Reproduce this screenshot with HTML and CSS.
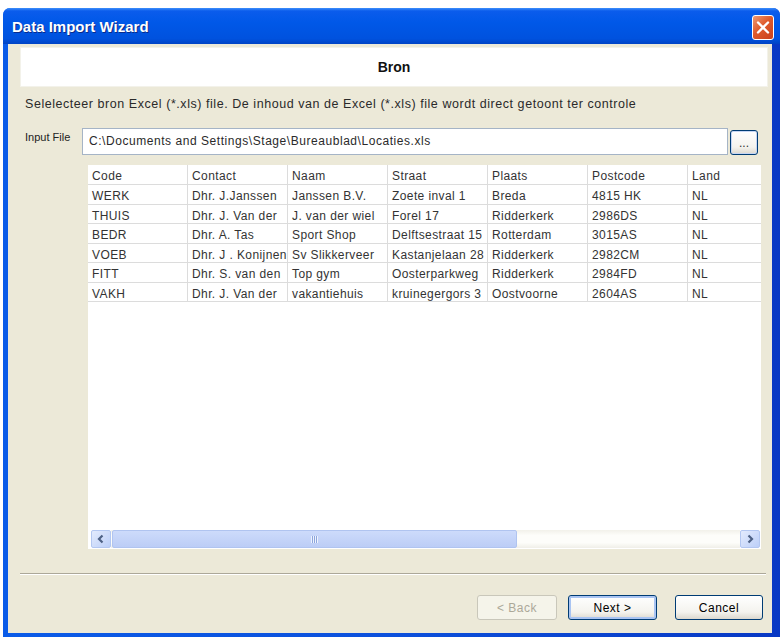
FILE: index.html
```html
<!DOCTYPE html>
<html>
<head>
<meta charset="UTF-8">
<title>Data Import Wizard</title>
<link rel="stylesheet" href="styles.css">
</head>
<body>
<div class="window">
    <div class="titlebar">
        <span class="title">Data Import Wizard</span>
        <span class="close">
            <svg width="20" height="23" viewBox="0 0 20 23"><path d="M5 6.5 L15 16.5 M15 6.5 L5 16.5" stroke="#fff" stroke-width="2.4" stroke-linecap="round"/></svg>
        </span>
    </div>
    <div class="client">
        <div class="step-head">Bron</div>
        <p class="hint">Selelecteer bron Excel (*.xls) file. De inhoud van de Excel (*.xls) file wordt direct getoont ter controle</p>
        <div class="file-row">
            <label>Input File</label>
            <div class="file-input">C:\Documents and Settings\Stage\Bureaublad\Locaties.xls</div>
            <button class="btn browse" type="button">...</button>
        </div>
        <div class="grid-box">
            <div class="grid">
                <table>
                    <tr class="head"><td>Code</td><td>Contact</td><td>Naam</td><td>Straat</td><td>Plaats</td><td>Postcode</td><td>Land</td></tr>
                    <tr><td>WERK</td><td>Dhr. J.Janssen</td><td>Janssen B.V.</td><td>Zoete inval 1</td><td>Breda</td><td>4815 HK</td><td>NL</td></tr>
                    <tr><td>THUIS</td><td>Dhr. J. Van der</td><td>J. van der wiel</td><td>Forel 17</td><td>Ridderkerk</td><td>2986DS</td><td>NL</td></tr>
                    <tr><td>BEDR</td><td>Dhr. A. Tas</td><td>Sport Shop</td><td>Delftsestraat 15</td><td>Rotterdam</td><td>3015AS</td><td>NL</td></tr>
                    <tr><td>VOEB</td><td>Dhr. J . Konijnen</td><td>Sv Slikkerveer</td><td>Kastanjelaan 28</td><td>Ridderkerk</td><td>2982CM</td><td>NL</td></tr>
                    <tr><td>FITT</td><td>Dhr. S. van den</td><td>Top gym</td><td>Oosterparkweg</td><td>Ridderkerk</td><td>2984FD</td><td>NL</td></tr>
                    <tr><td>VAKH</td><td>Dhr. J. Van der</td><td>vakantiehuis</td><td>kruinegergors 3</td><td>Oostvoorne</td><td>2604AS</td><td>NL</td></tr>
                </table>
            </div>
            <div class="hscroll">
                <span class="sb-btn">
                    <svg width="10" height="10" viewBox="0 0 10 10"><path d="M6.5 1.5 L3 5 L6.5 8.5" fill="none" stroke="#4d6185" stroke-width="2.2"/></svg>
                </span>
                <span class="sb-track">
                    <span class="sb-thumb"><span class="grip"></span></span>
                </span>
                <span class="sb-btn">
                    <svg width="10" height="10" viewBox="0 0 10 10"><path d="M3.5 1.5 L7 5 L3.5 8.5" fill="none" stroke="#4d6185" stroke-width="2.2"/></svg>
                </span>
            </div>
        </div>
        <div class="sep"></div>
        <div class="buttons">
            <button class="btn back" type="button" disabled>&lt; Back</button>
            <button class="btn next" type="button">Next &gt;</button>
            <button class="btn cancel" type="button">Cancel</button>
        </div>
    </div>
</div>
</body>
</html>
```

FILE: styles.css
```css
/* XP style wizard window */
html, body {margin: 0; padding: 0; background: #ffffff;}
body {font: 12px "Liberation Sans", Arial, sans-serif; color: #222;}

.window{
    margin: 8px 1px 0 3px;
    width: 777px;
    height: 629px;
    display: flex;
    flex-direction: column;
    background: linear-gradient(90deg, #0a5be8 0, #0c50dc 50%, #0838c4 100%);
    border-radius: 7px 7px 0 0;
}
.titlebar{
    height: 36px;
    flex: none;
    display: flex;
    align-items: center;
    justify-content: space-between;
    padding: 0 6px 0 9px;
    border-radius: 7px 7px 0 0;
    background: linear-gradient(#3d8ffb 0, #0b5cec 3px, #0058e8 40%, #0052de 85%, #0043c4 100%);
}
.title{
    color: #fff;
    font: bold 15px "Liberation Sans", Arial, sans-serif;
    text-shadow: 1px 1px 0 #0a2b8a;
    margin-top: 1px;
}
.close{
    width: 20px;
    height: 23px;
    border: 1px solid #fff;
    border-radius: 3px;
    background: linear-gradient(135deg, #ef9a74, #df5a2c 45%, #c9411c);
    display: block;
    margin-top: 2px;
}
.close svg {display: block;}

.client{
    flex: 1;
    margin: 0 8px 4px 5px;
    background: #ece9d8;
    display: flex;
    flex-direction: column;
}
.step-head{
    margin: 3px 4px 0 12px;
    height: 40px;
    background: #fff;
    border: 1px solid #f3f2ea;
    box-sizing: border-box;
    display: flex;
    align-items: center;
    justify-content: center;
    font: bold 14px "Liberation Sans", Arial, sans-serif;
    color: #111;
}
.hint{
    margin: 9px 0 0 17px;
    line-height: 16px;
    font-size: 12.5px;
    letter-spacing: 0.55px;
    color: #2a2a2a;
}
.file-row{
    margin-top: 16px;
    height: 27px;
    display: flex;
    align-items: flex-start;
    padding-left: 17px;
}
.file-row label{
    width: 57px;
    line-height: 16px;
    padding-top: 1px;
    font-size: 11px;
}
.file-input{
    width: 646px;
    height: 27px;
    box-sizing: border-box;
    border: 1px solid #a5b4c6;
    background: #fff;
    padding-left: 6px;
    line-height: 25px;
    letter-spacing: 0.55px;
    white-space: nowrap;
    color: #2a2a2a;
}
.btn{
    font: 12px "Liberation Sans", Arial, sans-serif;
    letter-spacing: 0.5px;
    color: #000;
    height: 25px;
    border: 1px solid #003c74;
    border-radius: 3px;
    background: linear-gradient(#ffffff, #f4f3ee 70%, #dcd8ce);
    padding: 0;
}
.browse{
    width: 28px;
    margin: 2px 0 0 2px;
    line-height: 14px;
    color: #333;
    letter-spacing: 0;
    box-shadow: inset 0 0 0 1px #c6d6f4;
}

.grid-box{
    margin: 10px 11px 0 80px;
    height: 384px;
    background: #fff;
    display: flex;
    flex-direction: column;
}
.grid{
    flex: 1;
    overflow: hidden;
}
table{
    border-collapse: collapse;
    table-layout: fixed;
    width: 700px;
}
td{
    width: 95px;
    height: 13.5px;
    padding: 5px 0 0 4px;
    line-height: 13.5px;
    border-right: 1px solid #dcdcdc;
    border-bottom: 1px solid #dcdcdc;
    white-space: nowrap;
    overflow: hidden;
    color: #333;
    font-size: 12px;
    letter-spacing: 0.4px;
}
tr.head td {height: 15px; line-height: 15px; padding-top: 4px;}

.hscroll{
    height: 18px;
    margin: 0 1px 1px 3px;
    display: flex;
}
.sb-btn{
    width: 18px;
    border: 1px solid #b3c7f1;
    border-radius: 2px;
    background: linear-gradient(135deg, #e3ebfd, #bccff8);
    display: flex;
    align-items: center;
    justify-content: center;
}
.sb-track{
    flex: 1;
    background: linear-gradient(#f2f1ea, #fdfdfa 30%, #fdfdfa 70%, #f0efe8);
    display: flex;
    padding: 0 1px;
}
.sb-thumb{
    width: 403px;
    border: 1px solid #b0c4f0;
    border-radius: 2px;
    background: linear-gradient(#cddbfb, #bccdf6);
    display: flex;
    align-items: center;
    justify-content: center;
}
.grip{
    width: 7px;
    height: 7px;
    background: repeating-linear-gradient(90deg, #eef3fe 0 1px, #8ea6dc 1px 2px);
}

.sep{
    margin: 24px 6px 0 12px;
    border-top: 1px solid #aca899;
    border-bottom: 1px solid #fff;
}
.buttons{
    margin-top: 20px;
    display: flex;
    justify-content: flex-end;
    padding-right: 9px;
}
.back{
    width: 80px;
    margin-right: 11px;
    color: #aca899;
    border-color: #c9c7ba;
    background: #f5f4ea;
}
.next{
    width: 89px;
    margin-right: 18px;
    box-shadow: inset 0 0 0 2px #a9c4f2;
}
.cancel{
    width: 88px;
}
```
